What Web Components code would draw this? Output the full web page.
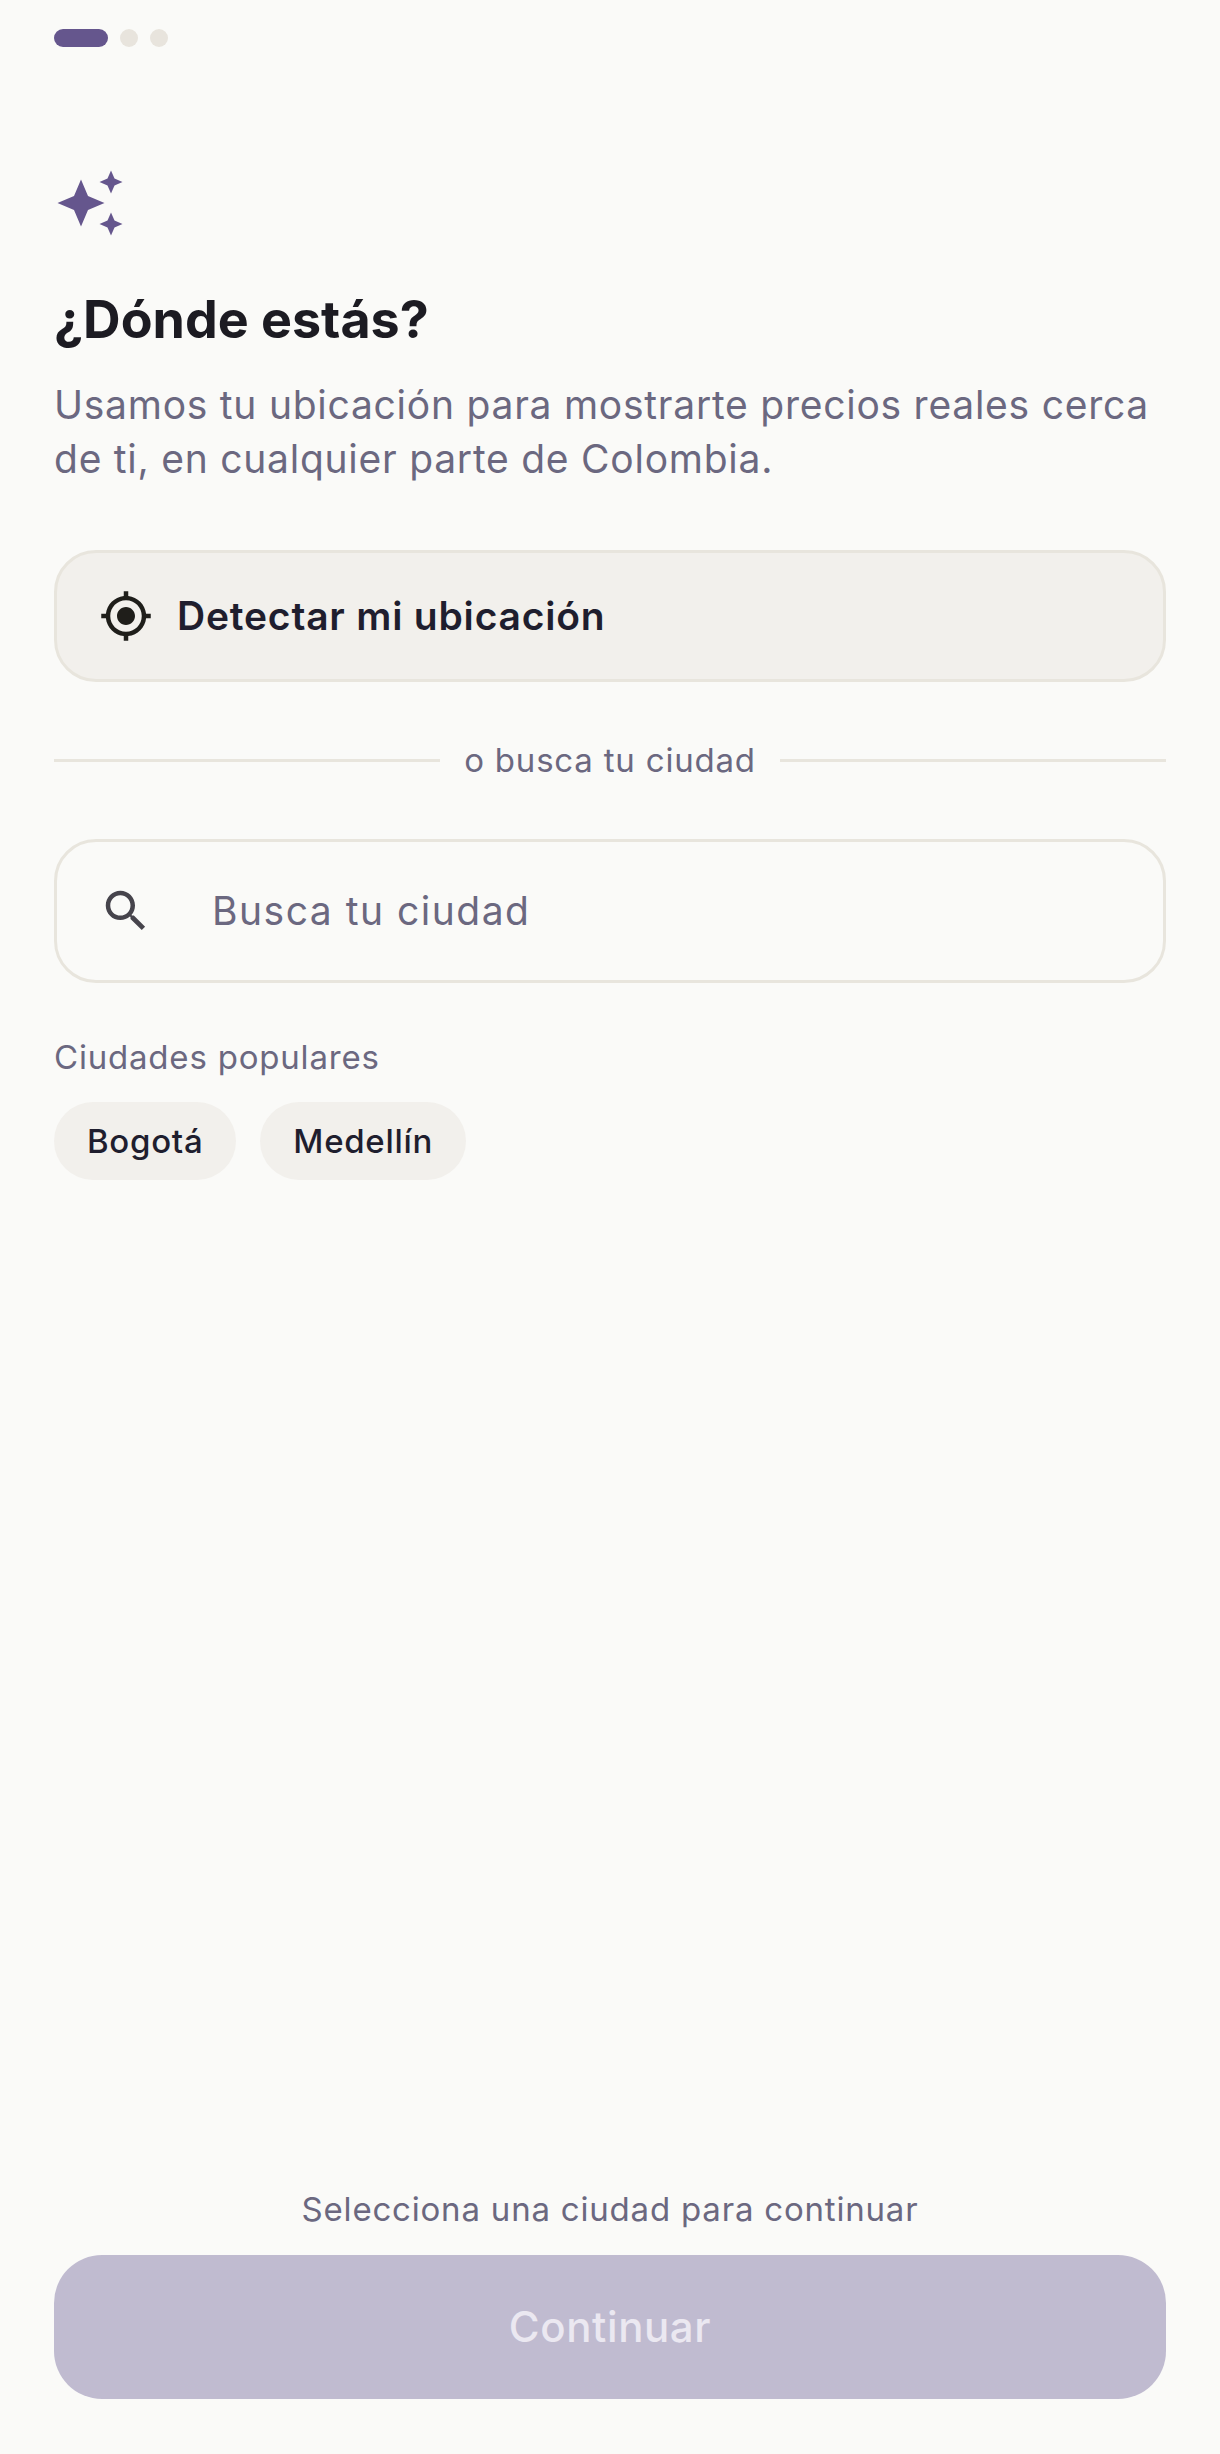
<!DOCTYPE html>
<html lang="es">
<head>
<meta charset="utf-8">
<title>Onboarding</title>
<style>
    html, body { margin: 0; height: 100%; background: #fafaf8; }
    body { font-family: Inter, "Liberation Sans", sans-serif; }
</style>
</head>
<body>
<onboard-screen>
    <step-dots></step-dots>
    <spark-icon></spark-icon>
    <screen-title>¿Dónde estás?</screen-title>
    <screen-text>Usamos tu ubicación para mostrarte precios reales cerca de ti, en cualquier parte de Colombia.</screen-text>
    <detect-button>Detectar mi ubicación</detect-button>
    <or-divider>o busca tu ciudad</or-divider>
    <search-field placeholder="Busca tu ciudad"></search-field>
    <popular-cities label="Ciudades populares">
        <city-chip>Bogotá</city-chip>
        <city-chip>Medellín</city-chip>
    </popular-cities>
    <screen-footer slot="footer" hint="Selecciona una ciudad para continuar">Continuar</screen-footer>
</onboard-screen>
<script>
class BaseElement extends HTMLElement {
    constructor() {
        super();
        this.attachShadow({ mode: 'open' });
    }
    connectedCallback() {
        this.shadowRoot.innerHTML = this.render();
    }
}

class OnboardScreen extends BaseElement {
    render() {
        return `
            <style>
                :host {
                    display: flex;
                    flex-direction: column;
                    box-sizing: border-box;
                    min-height: 100vh;
                    padding: 29px 54px 55px;
                    color: #1c1b22;
                }
                .grow { flex: 1; }
            </style>
            <slot></slot>
            <div class="grow"></div>
            <slot name="footer"></slot>`;
    }
}

class StepDots extends BaseElement {
    render() {
        return `
            <style>
                :host { display: flex; gap: 12px; }
                span { width: 18px; height: 18px; border-radius: 9px; background: #e8e4dd; }
                .on { width: 54px; background: #65568d; }
            </style>
            <span class="on"></span><span></span><span></span>`;
    }
}

class SparkIcon extends BaseElement {
    render() {
        return `
            <style>
                :host { display: block; margin-top: 118px; height: 72px; }
                svg { display: block; }
            </style>
            <svg width="72" height="72" viewBox="0 0 72 72" fill="#65568d">
                <path d="M27 14.500 L34 31 L50.500 38 L34 45 L27 61.500 L20 45 L3.500 38 L20 31Z"/>
                <path d="M57 5.500 L60.500 13.500 L68.500 17 L60.500 20.500 L57 28.500 L53.500 20.500 L45.500 17 L53.500 13.500Z"/>
                <path d="M57 47.500 L60.500 55.500 L68.500 59 L60.500 62.500 L57 70.500 L53.500 62.500 L45.500 59 L53.500 55.500Z"/>
            </svg>`;
    }
}

class ScreenTitle extends BaseElement {
    render() {
        return `
            <style>
                :host {
                    display: block;
                    margin-top: 53px;
                    font: 700 52px/60px Inter, sans-serif;
                    color: #1c1b22;
                }
            </style>
            <slot></slot>`;
    }
}

class ScreenText extends BaseElement {
    render() {
        return `
            <style>
                :host {
                    display: block;
                    margin-top: 28px;
                    font: 400 39px/54px Inter, sans-serif;
                    letter-spacing: 0.75px;
                    color: #6b6880;
                }
            </style>
            <slot></slot>`;
    }
}

class DetectButton extends BaseElement {
    render() {
        return `
            <style>
                :host {
                    display: flex;
                    align-items: center;
                    gap: 24px;
                    box-sizing: border-box;
                    height: 132px;
                    margin-top: 64px;
                    padding: 0 42px;
                    background: #f2f0ec;
                    border: 3px solid #e8e5dd;
                    border-radius: 42px;
                    font: 600 39px/48px Inter, sans-serif;
                    letter-spacing: 0.8px;
                    color: #1f1e2e;
                }
                svg { display: block; flex: none; }
            </style>
            <svg width="54" height="54" viewBox="0 0 24 24" fill="#1f1e1a">
                <path d="M12 8c-2.210 0-4 1.790-4 4s1.790 4 4 4 4-1.790 4-4-1.790-4-4-4zm8.940 3c-.46-4.170-3.770-7.480-7.940-7.940V1h-2v2.060C6.830 3.520 3.520 6.830 3.060 11H1v2h2.060c.46 4.170 3.770 7.480 7.940 7.940V23h2v-2.060c4.170-.46 7.480-3.770 7.940-7.940H23v-2h-2.060zM12 19c-3.870 0-7-3.130-7-7s3.130-7 7-7 7 3.130 7 7-3.130 7-7 7z"/>
            </svg>
            <slot></slot>`;
    }
}

class OrDivider extends BaseElement {
    render() {
        return `
            <style>
                :host {
                    display: flex;
                    align-items: center;
                    gap: 24px;
                    margin-top: 58px;
                    font: 400 33px/40px Inter, sans-serif;
                    letter-spacing: 0.8px;
                    color: #6b6880;
                }
                i { flex: 1; height: 3px; background: #e8e5dd; }
            </style>
            <i></i><slot></slot><i></i>`;
    }
}

class SearchField extends BaseElement {
    render() {
        return `
            <style>
                :host {
                    display: flex;
                    align-items: center;
                    box-sizing: border-box;
                    height: 144px;
                    margin-top: 59px;
                    padding: 0 42px;
                    border: 3px solid #e8e5dd;
                    border-radius: 42px;
                    font: 400 39px/48px Inter, sans-serif;
                    letter-spacing: 1.5px;
                    color: #6b6880;
                }
                svg { display: block; flex: none; margin-right: 59px; }
            </style>
            <svg width="54" height="54" viewBox="0 0 24 24" fill="#46444c">
                <path d="M15.500 14h-.79l-.28-.27C15.410 12.590 16 11.110 16 9.500 16 5.910 13.090 3 9.500 3S3 5.910 3 9.500 5.910 16 9.500 16c1.610 0 3.090-.59 4.230-1.570l.27.28v.79l5 4.990L20.490 19l-4.990-5zm-6 0C7.010 14 5 11.990 5 9.500S7.010 5 9.500 5 14 7.010 14 9.500 11.990 14 9.500 14z"/>
            </svg>
            <span>${this.getAttribute('placeholder')}</span>`;
    }
}

class PopularCities extends BaseElement {
    render() {
        return `
            <style>
                :host {
                    display: block;
                    margin-top: 54px;
                    font: 400 33px/40px Inter, sans-serif;
                    letter-spacing: 0.8px;
                    color: #6b6880;
                }
                .row { display: flex; gap: 24px; margin-top: 25px; }
            </style>
            <div>${this.getAttribute('label')}</div>
            <div class="row"><slot></slot></div>`;
    }
}

class CityChip extends BaseElement {
    render() {
        return `
            <style>
                :host {
                    display: flex;
                    align-items: center;
                    height: 78px;
                    padding: 0 33px;
                    background: #f2f0ec;
                    border-radius: 39px;
                    font: 500 33px/40px Inter, sans-serif;
                    letter-spacing: 0.7px;
                    color: #1f1e2e;
                }
            </style>
            <slot></slot>`;
    }
}

class ScreenFooter extends BaseElement {
    render() {
        return `
            <style>
                :host { display: block; text-align: center; }
                p {
                    margin: 0 0 26px;
                    font: 400 33px/40px Inter, sans-serif;
                    letter-spacing: 0.8px;
                    color: #6b6880;
                }
                div {
                    display: flex;
                    align-items: center;
                    justify-content: center;
                    height: 144px;
                    background: #c0bbd0;
                    border-radius: 48px;
                    font: 500 42px/50px Inter, sans-serif;
                    letter-spacing: 0.6px;
                    color: #ebe8f1;
                }
            </style>
            <p>${this.getAttribute('hint')}</p>
            <div><slot></slot></div>`;
    }
}

customElements.define('onboard-screen', OnboardScreen);
customElements.define('step-dots', StepDots);
customElements.define('spark-icon', SparkIcon);
customElements.define('screen-title', ScreenTitle);
customElements.define('screen-text', ScreenText);
customElements.define('detect-button', DetectButton);
customElements.define('or-divider', OrDivider);
customElements.define('search-field', SearchField);
customElements.define('popular-cities', PopularCities);
customElements.define('city-chip', CityChip);
customElements.define('screen-footer', ScreenFooter);
</script>
</body>
</html>
